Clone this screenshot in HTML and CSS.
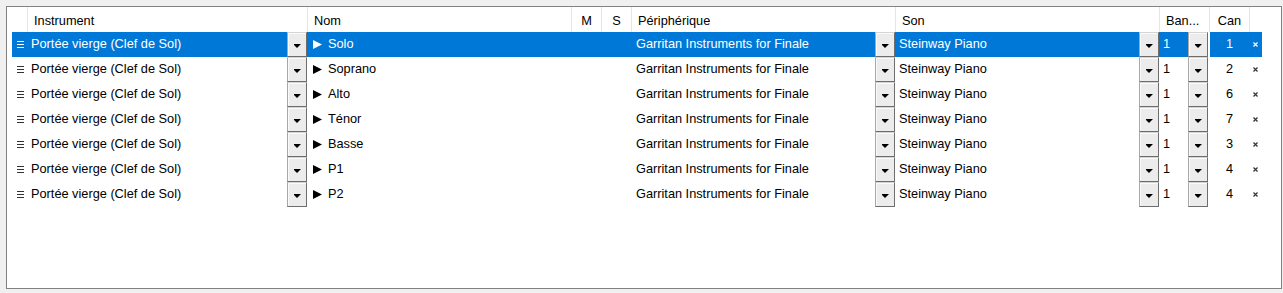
FILE: index.html
```html
<!DOCTYPE html>
<html lang="fr">
<head>
<meta charset="utf-8">
<title>Instruments</title>
<link rel="stylesheet" href="styles.css">
</head>
<body>
<div class="box">
  <div class="head">
    <div class="hc"></div>
    <div class="hc">Instrument</div>
    <div class="hc">Nom</div>
    <div class="hc c">M</div>
    <div class="hc c">S</div>
    <div class="hc">Périphérique</div>
    <div class="hc">Son</div>
    <div class="hc">Ban...</div>
    <div class="hc c">Can</div>
    <div class="hc last"></div>
  </div>

  <div class="row sel">
    <div class="cell handle"><svg width="7" height="7" viewBox="0 0 7 7"><rect x="0" y="0" width="7" height="1"/><rect x="0" y="3" width="7" height="1"/><rect x="0" y="6" width="7" height="1"/></svg></div>
    <div class="cell"><span class="txt">Portée vierge (Clef de Sol)</span><span class="btn"><i class="arrow"></i></span></div>
    <div class="cell nom"><svg class="tri" width="9" height="9" viewBox="0 0 9 9"><polygon points="0,0 9,4.5 0,9"/></svg><span class="txt">Solo</span></div>
    <div class="cell"><span class="txt">Garritan Instruments for Finale</span><span class="btn"><i class="arrow"></i></span></div>
    <div class="cell"><span class="txt">Steinway Piano</span><span class="btn"><i class="arrow"></i></span></div>
    <div class="cell"><span class="txt">1</span><span class="btn"><i class="arrow"></i></span></div>
    <div class="gap"></div>
    <div class="cell num">1</div>
    <div class="cell del"><svg width="5" height="5" viewBox="0 0 5 5"><path d="M0.5 0.5 L4.5 4.5 M4.5 0.5 L0.5 4.5"/></svg></div>
  </div>

  <div class="row">
    <div class="cell handle"><svg width="7" height="7" viewBox="0 0 7 7"><rect x="0" y="0" width="7" height="1"/><rect x="0" y="3" width="7" height="1"/><rect x="0" y="6" width="7" height="1"/></svg></div>
    <div class="cell"><span class="txt">Portée vierge (Clef de Sol)</span><span class="btn"><i class="arrow"></i></span></div>
    <div class="cell nom"><svg class="tri" width="9" height="9" viewBox="0 0 9 9"><polygon points="0,0 9,4.5 0,9"/></svg><span class="txt">Soprano</span></div>
    <div class="cell"><span class="txt">Garritan Instruments for Finale</span><span class="btn"><i class="arrow"></i></span></div>
    <div class="cell"><span class="txt">Steinway Piano</span><span class="btn"><i class="arrow"></i></span></div>
    <div class="cell"><span class="txt">1</span><span class="btn"><i class="arrow"></i></span></div>
    <div class="gap"></div>
    <div class="cell num">2</div>
    <div class="cell del"><svg width="5" height="5" viewBox="0 0 5 5"><path d="M0.5 0.5 L4.5 4.5 M4.5 0.5 L0.5 4.5"/></svg></div>
  </div>

  <div class="row">
    <div class="cell handle"><svg width="7" height="7" viewBox="0 0 7 7"><rect x="0" y="0" width="7" height="1"/><rect x="0" y="3" width="7" height="1"/><rect x="0" y="6" width="7" height="1"/></svg></div>
    <div class="cell"><span class="txt">Portée vierge (Clef de Sol)</span><span class="btn"><i class="arrow"></i></span></div>
    <div class="cell nom"><svg class="tri" width="9" height="9" viewBox="0 0 9 9"><polygon points="0,0 9,4.5 0,9"/></svg><span class="txt">Alto</span></div>
    <div class="cell"><span class="txt">Garritan Instruments for Finale</span><span class="btn"><i class="arrow"></i></span></div>
    <div class="cell"><span class="txt">Steinway Piano</span><span class="btn"><i class="arrow"></i></span></div>
    <div class="cell"><span class="txt">1</span><span class="btn"><i class="arrow"></i></span></div>
    <div class="gap"></div>
    <div class="cell num">6</div>
    <div class="cell del"><svg width="5" height="5" viewBox="0 0 5 5"><path d="M0.5 0.5 L4.5 4.5 M4.5 0.5 L0.5 4.5"/></svg></div>
  </div>

  <div class="row">
    <div class="cell handle"><svg width="7" height="7" viewBox="0 0 7 7"><rect x="0" y="0" width="7" height="1"/><rect x="0" y="3" width="7" height="1"/><rect x="0" y="6" width="7" height="1"/></svg></div>
    <div class="cell"><span class="txt">Portée vierge (Clef de Sol)</span><span class="btn"><i class="arrow"></i></span></div>
    <div class="cell nom"><svg class="tri" width="9" height="9" viewBox="0 0 9 9"><polygon points="0,0 9,4.5 0,9"/></svg><span class="txt">Ténor</span></div>
    <div class="cell"><span class="txt">Garritan Instruments for Finale</span><span class="btn"><i class="arrow"></i></span></div>
    <div class="cell"><span class="txt">Steinway Piano</span><span class="btn"><i class="arrow"></i></span></div>
    <div class="cell"><span class="txt">1</span><span class="btn"><i class="arrow"></i></span></div>
    <div class="gap"></div>
    <div class="cell num">7</div>
    <div class="cell del"><svg width="5" height="5" viewBox="0 0 5 5"><path d="M0.5 0.5 L4.5 4.5 M4.5 0.5 L0.5 4.5"/></svg></div>
  </div>

  <div class="row">
    <div class="cell handle"><svg width="7" height="7" viewBox="0 0 7 7"><rect x="0" y="0" width="7" height="1"/><rect x="0" y="3" width="7" height="1"/><rect x="0" y="6" width="7" height="1"/></svg></div>
    <div class="cell"><span class="txt">Portée vierge (Clef de Sol)</span><span class="btn"><i class="arrow"></i></span></div>
    <div class="cell nom"><svg class="tri" width="9" height="9" viewBox="0 0 9 9"><polygon points="0,0 9,4.5 0,9"/></svg><span class="txt">Basse</span></div>
    <div class="cell"><span class="txt">Garritan Instruments for Finale</span><span class="btn"><i class="arrow"></i></span></div>
    <div class="cell"><span class="txt">Steinway Piano</span><span class="btn"><i class="arrow"></i></span></div>
    <div class="cell"><span class="txt">1</span><span class="btn"><i class="arrow"></i></span></div>
    <div class="gap"></div>
    <div class="cell num">3</div>
    <div class="cell del"><svg width="5" height="5" viewBox="0 0 5 5"><path d="M0.5 0.5 L4.5 4.5 M4.5 0.5 L0.5 4.5"/></svg></div>
  </div>

  <div class="row">
    <div class="cell handle"><svg width="7" height="7" viewBox="0 0 7 7"><rect x="0" y="0" width="7" height="1"/><rect x="0" y="3" width="7" height="1"/><rect x="0" y="6" width="7" height="1"/></svg></div>
    <div class="cell"><span class="txt">Portée vierge (Clef de Sol)</span><span class="btn"><i class="arrow"></i></span></div>
    <div class="cell nom"><svg class="tri" width="9" height="9" viewBox="0 0 9 9"><polygon points="0,0 9,4.5 0,9"/></svg><span class="txt">P1</span></div>
    <div class="cell"><span class="txt">Garritan Instruments for Finale</span><span class="btn"><i class="arrow"></i></span></div>
    <div class="cell"><span class="txt">Steinway Piano</span><span class="btn"><i class="arrow"></i></span></div>
    <div class="cell"><span class="txt">1</span><span class="btn"><i class="arrow"></i></span></div>
    <div class="gap"></div>
    <div class="cell num">4</div>
    <div class="cell del"><svg width="5" height="5" viewBox="0 0 5 5"><path d="M0.5 0.5 L4.5 4.5 M4.5 0.5 L0.5 4.5"/></svg></div>
  </div>

  <div class="row">
    <div class="cell handle"><svg width="7" height="7" viewBox="0 0 7 7"><rect x="0" y="0" width="7" height="1"/><rect x="0" y="3" width="7" height="1"/><rect x="0" y="6" width="7" height="1"/></svg></div>
    <div class="cell"><span class="txt">Portée vierge (Clef de Sol)</span><span class="btn"><i class="arrow"></i></span></div>
    <div class="cell nom"><svg class="tri" width="9" height="9" viewBox="0 0 9 9"><polygon points="0,0 9,4.5 0,9"/></svg><span class="txt">P2</span></div>
    <div class="cell"><span class="txt">Garritan Instruments for Finale</span><span class="btn"><i class="arrow"></i></span></div>
    <div class="cell"><span class="txt">Steinway Piano</span><span class="btn"><i class="arrow"></i></span></div>
    <div class="cell"><span class="txt">1</span><span class="btn"><i class="arrow"></i></span></div>
    <div class="gap"></div>
    <div class="cell num">4</div>
    <div class="cell del"><svg width="5" height="5" viewBox="0 0 5 5"><path d="M0.5 0.5 L4.5 4.5 M4.5 0.5 L0.5 4.5"/></svg></div>
  </div>
</div>
</body>
</html>
```

FILE: styles.css
```css
* { box-sizing: border-box; }
html, body { margin: 0; padding: 0; background: #f0f0f0; }
body {
  font-family: "Liberation Sans", Arial, sans-serif;
  font-size: 12.75px;
  color: #000;
}
.box {
  margin: 6px 0 0 6px;
  width: 1276px;
  height: 283px;
  border: 1px solid #828282;
  background: #fff;
  overflow: hidden;
}
.head {
  display: grid;
  grid-template-columns: 21px 280px 264px 30px 30px 264px 264px 50px 40px 1fr;
  height: 25px;
}
.hc {
  height: 25px;
  line-height: 27px;
  padding-left: 6px;
  border-right: 1px solid #e5e5e5;
  white-space: nowrap;
  overflow: hidden;
}
.hc.c { padding-left: 0; text-align: center; }
.hc.last { border-right: none; }

.row {
  display: grid;
  grid-template-columns: 15px 280px 325px 263px 264px 49px 2px 39px 13px;
  height: 25px;
  margin-left: 5px;
  width: 1250px;
}
.cell {
  display: flex;
  align-items: center;
  justify-content: space-between;
  height: 25px;
  padding-left: 4px;
  line-height: 23px;
  white-space: nowrap;
  overflow: hidden;
}
.cell .txt { align-self: flex-start; line-height: 23px; }
.row.sel .cell { background: #0078d7; color: #fff; }

.handle { padding-left: 5px; justify-content: flex-start; padding-bottom: 1px; }
.handle svg { fill: #333; display: block; }
.row.sel .handle svg { fill: #fff; }

.nom { padding-left: 6px; justify-content: flex-start; }
.tri { fill: currentColor; display: block; margin-right: 6px; margin-top: -1px; }

.num { justify-content: center; padding-left: 0; align-items: flex-start; }
.del { justify-content: center; padding-left: 0; padding-bottom: 1px; }
.del svg { display: block; stroke: #333; stroke-width: 1.2; fill: none; }
.row.sel .del svg { stroke: #fff; }

.btn {
  flex: none;
  width: 20px;
  height: 25px;
  display: flex;
  align-items: center;
  justify-content: center;
  padding-top: 3px;
  background: #ececec;
  border: 1px solid;
  border-color: #d4d4d4 #6d6d6d #6d6d6d #a8a8a8;
  box-shadow: inset 1px 1px 0 #fafafa;
}
.arrow {
  display: block;
  width: 7px;
  height: 4px;
  background: #000;
  clip-path: polygon(0px 0px, 7px 0px, 7px 1px, 6px 1px, 6px 2px, 5px 2px, 5px 3px, 4px 3px, 4px 4px, 3px 4px, 3px 3px, 2px 3px, 2px 2px, 1px 2px, 1px 1px, 0px 1px);
}
```
